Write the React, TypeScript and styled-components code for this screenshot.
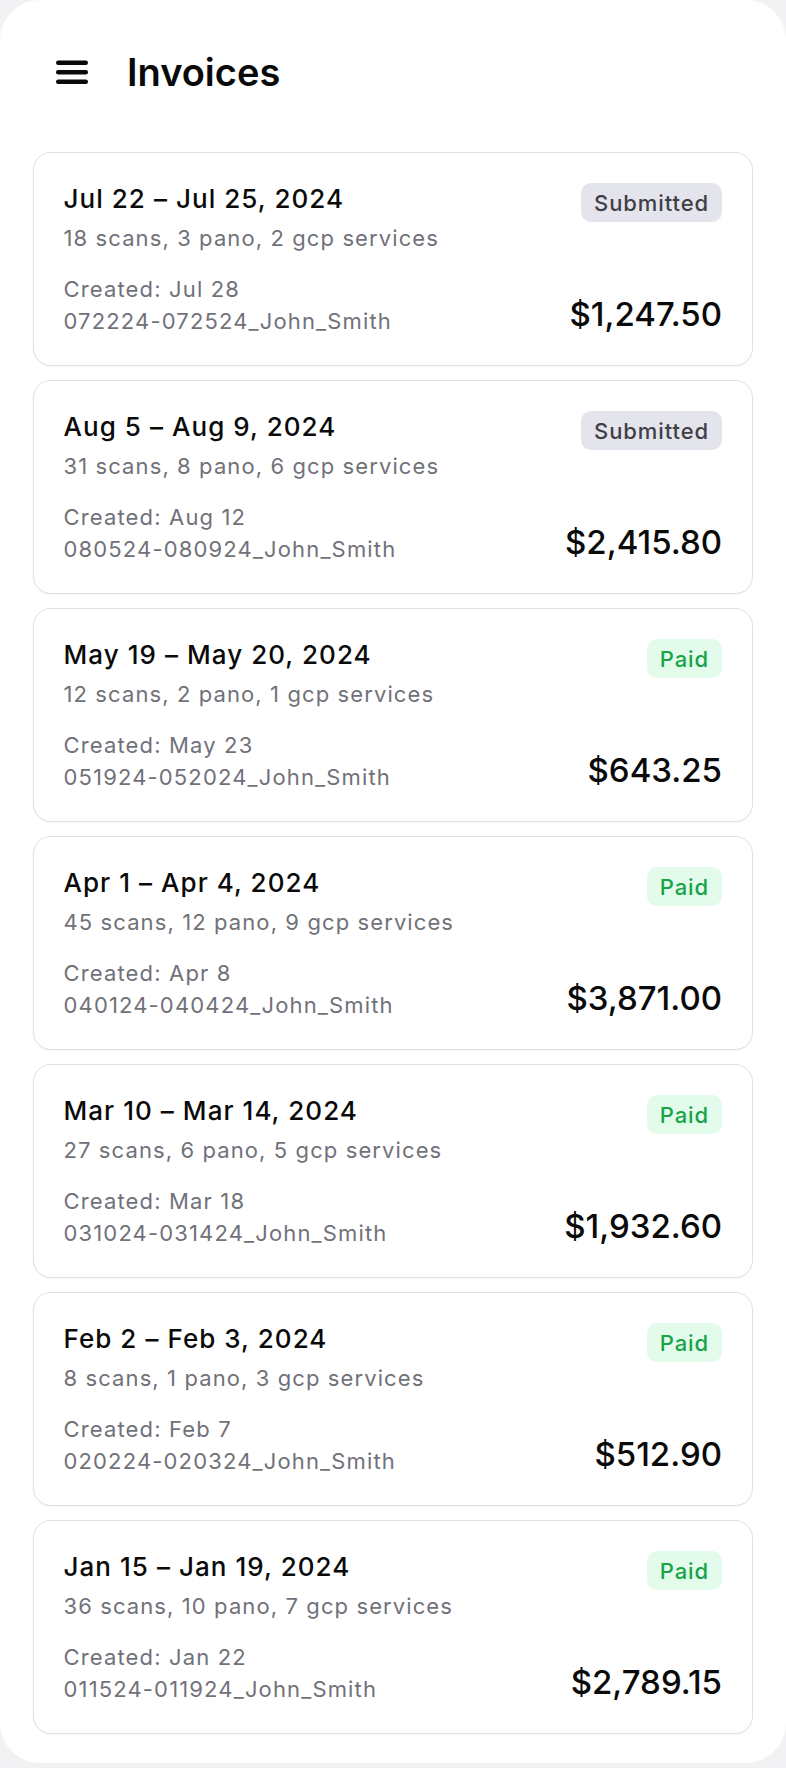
import React from 'react'
import styled, { createGlobalStyle } from 'styled-components'

const GlobalStyle = createGlobalStyle`
  html, body {
    margin: 0;
    padding: 0;
    background: #f2f2f5;
    font-family: Inter, 'Noto Sans', 'Liberation Sans', sans-serif;
    -webkit-font-smoothing: antialiased;
  }
  * {
    box-sizing: border-box;
  }
`

const Screen = styled.div`
  width: 786px;
  min-height: 1763px;
  background: #ffffff;
  border-radius: 40px;
  padding: 40px 33px 28px 33px;
`

const Header = styled.header`
  display: flex;
  align-items: center;
  gap: 39px;
  height: 64px;
  padding-left: 23px;
  margin-bottom: 48px;
`

const Title = styled.h1`
  margin: 0;
  font-size: 38px;
  line-height: 64px;
  font-weight: 600;
  color: #0a0a0a;
  letter-spacing: 0;
`

const MenuButton = styled.button`
  display: flex;
  align-items: center;
  justify-content: center;
  width: 32px;
  height: 24px;
  padding: 0;
  border: none;
  background: none;
  cursor: pointer;
`

const List = styled.div`
  display: flex;
  flex-direction: column;
  gap: 14px;
`

const Card = styled.div`
  display: flex;
  flex-direction: column;
  height: 214px;
  border: 1.5px solid #dfdeea;
  border-radius: 18px;
  padding: 30px 30px 28px 29.5px;
  background: #ffffff;
  box-shadow: 0 1px 2px rgba(30, 30, 60, 0.04);
`

const TopRow = styled.div`
  display: flex;
  justify-content: space-between;
  align-items: flex-start;
`

const Period = styled.div`
  font-size: 26px;
  line-height: 32px;
  font-weight: 500;
  color: #0a0a0a;
  letter-spacing: 1.05px;
`

const Summary = styled.div`
  margin-top: 8px;
  font-size: 22px;
  line-height: 30px;
  color: #71717a;
  letter-spacing: 1.1px;
`

const Badge = styled.span<{ $status: 'Submitted' | 'Paid' }>`
  display: inline-flex;
  align-items: center;
  height: 39px;
  padding: 0 13px;
  border-radius: 10px;
  font-size: 22px;
  font-weight: 500;
  letter-spacing: 0.9px;
  background: ${p => (p.$status === 'Paid' ? '#e2fbea' : '#e4e4ec')};
  color: ${p => (p.$status === 'Paid' ? '#16a34a' : '#3f3f46')};
`

const BottomRow = styled.div`
  display: flex;
  justify-content: space-between;
  align-items: flex-end;
  margin-top: 20px;
`

const Meta = styled.div`
  font-size: 22px;
  line-height: 32px;
  color: #71717a;
  letter-spacing: 1.15px;
`

const Amount = styled.div`
  font-size: 33px;
  line-height: 40px;
  font-weight: 500;
  color: #0a0a0a;
  margin-bottom: 3px;
`

type Invoice = {
  period: string
  summary: string
  created: string
  file: string
  amount: string
  status: 'Submitted' | 'Paid'
}

const invoices: Invoice[] = [
  { period: 'Jul 22 – Jul 25, 2024', summary: '18 scans, 3 pano, 2 gcp services', created: 'Jul 28', file: '072224-072524_John_Smith', amount: '$1,247.50', status: 'Submitted' },
  { period: 'Aug 5 – Aug 9, 2024', summary: '31 scans, 8 pano, 6 gcp services', created: 'Aug 12', file: '080524-080924_John_Smith', amount: '$2,415.80', status: 'Submitted' },
  { period: 'May 19 – May 20, 2024', summary: '12 scans, 2 pano, 1 gcp services', created: 'May 23', file: '051924-052024_John_Smith', amount: '$643.25', status: 'Paid' },
  { period: 'Apr 1 – Apr 4, 2024', summary: '45 scans, 12 pano, 9 gcp services', created: 'Apr 8', file: '040124-040424_John_Smith', amount: '$3,871.00', status: 'Paid' },
  { period: 'Mar 10 – Mar 14, 2024', summary: '27 scans, 6 pano, 5 gcp services', created: 'Mar 18', file: '031024-031424_John_Smith', amount: '$1,932.60', status: 'Paid' },
  { period: 'Feb 2 – Feb 3, 2024', summary: '8 scans, 1 pano, 3 gcp services', created: 'Feb 7', file: '020224-020324_John_Smith', amount: '$512.90', status: 'Paid' },
  { period: 'Jan 15 – Jan 19, 2024', summary: '36 scans, 10 pano, 7 gcp services', created: 'Jan 22', file: '011524-011924_John_Smith', amount: '$2,789.15', status: 'Paid' }
]

function MenuIcon() {
  return (
    <svg width="32" height="24" viewBox="0 0 32 24" fill="#0a0a0a">
      <rect x="0" y="0.5" width="32" height="4.5" rx="2.25" />
      <rect x="0" y="10" width="32" height="4.5" rx="2.25" />
      <rect x="0" y="19.5" width="32" height="4.5" rx="2.25" />
    </svg>
  )
}

function InvoiceCard({ invoice }: { invoice: Invoice }) {
  return (
    <Card>
      <TopRow>
        <div>
          <Period>{invoice.period}</Period>
          <Summary>{invoice.summary}</Summary>
        </div>
        <Badge $status={invoice.status}>{invoice.status}</Badge>
      </TopRow>
      <BottomRow>
        <Meta>
          <div>Created: {invoice.created}</div>
          <div>{invoice.file}</div>
        </Meta>
        <Amount>{invoice.amount}</Amount>
      </BottomRow>
    </Card>
  )
}

export default function App() {
  return (
    <>
      <GlobalStyle />
      <Screen>
        <Header>
          <MenuButton aria-label="Menu">
            <MenuIcon />
          </MenuButton>
          <Title>Invoices</Title>
        </Header>
        <List>
          {invoices.map(inv => (
            <InvoiceCard key={inv.file} invoice={inv} />
          ))}
        </List>
      </Screen>
    </>
  )
}
